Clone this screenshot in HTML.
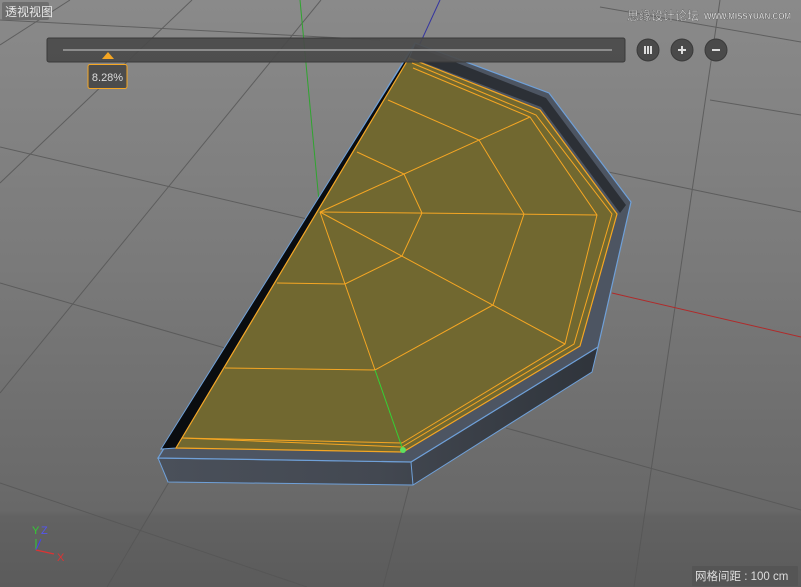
<!DOCTYPE html>
<html><head><meta charset="utf-8"><style>
html,body{margin:0;padding:0;width:801px;height:587px;overflow:hidden;background:#777;}
svg{display:block}
</style></head><body>
<svg width="801" height="587" viewBox="0 0 801 587" xmlns="http://www.w3.org/2000/svg" font-family="Liberation Sans, Noto Sans CJK SC, sans-serif">
<defs>
<linearGradient id="bg" x1="0" y1="0" x2="0" y2="1">
<stop offset="0" stop-color="#8a8a8a"/><stop offset="0.45" stop-color="#7a7a7a"/><stop offset="0.87" stop-color="#686868"/><stop offset="0.88" stop-color="#626262"/><stop offset="1" stop-color="#5b5b5b"/>
</linearGradient>
<linearGradient id="side" x1="0" y1="0" x2="1" y2="0">
<stop offset="0" stop-color="#4a505a"/><stop offset="0.5" stop-color="#434851"/><stop offset="1" stop-color="#2f343b"/>
</linearGradient>
</defs>
<rect width="801" height="587" fill="url(#bg)"/>
<g stroke="#555" stroke-width="1" fill="none" opacity="0.8">
<line x1="0" y1="147" x2="320" y2="222"/>
<line x1="560" y1="162" x2="801" y2="212"/>
<line x1="0" y1="283" x2="225" y2="348"/>
<line x1="506" y1="428" x2="801" y2="510"/>
<line x1="0" y1="483" x2="307" y2="587"/>
<line x1="600" y1="7" x2="801" y2="42"/>
<line x1="710" y1="100" x2="801" y2="115"/>
<line x1="192" y1="0" x2="0" y2="183"/>
<line x1="321" y1="0" x2="0" y2="393"/>
<line x1="169" y1="482" x2="107" y2="587"/>
<line x1="409" y1="487" x2="383" y2="587"/>
<line x1="720" y1="0" x2="634" y2="587"/>
<line x1="0" y1="45" x2="70" y2="0"/>
<line x1="0" y1="20" x2="380" y2="40"/>
</g>
<line x1="300" y1="0" x2="320" y2="212" stroke="#2fa52f" stroke-width="1"/>
<line x1="440" y1="0" x2="418" y2="48" stroke="#3535a0" stroke-width="1"/>
<line x1="612" y1="293" x2="801" y2="337" stroke="#b02a2a" stroke-width="1"/>
<polygon points="158,458 411,462 598,347 592,372 413,485 168,482" fill="url(#side)" stroke="#6fa0d8" stroke-width="1"/>
<line x1="411" y1="462" x2="413" y2="485" stroke="#6fa0d8"/>
<polygon points="415,43 549,93 631,202 598,347 411,462 158,458" fill="#4d5562" stroke="#6fa0d8" stroke-width="1.2"/>
<polygon points="414,46 546,98 626,205 620,213 541,107 409,57" fill="#2c3036"/>
<polygon points="415,44 409,58 176,448 161,449" fill="#0a0c0f" stroke="#6fa0d8" stroke-width="1"/>
<polygon points="409,58 540,110 617,214 580,346 403,452 176,448" fill="#716830" stroke="#f5a623" stroke-width="1.2"/>
<g stroke="#f5a623" stroke-width="1" fill="none">
<polyline points="412,63 536,115 612,214 574,344 402,447 182,438"/>
<polyline points="413,68 530,117 597,215 565,344 402,443"/>
<line x1="182" y1="438" x2="402" y2="443"/>
<polyline points="388,100 479,140 524,214 493,305 375,370 225,368"/>
<polyline points="357,152 404,174 422,213 402,256 345,284 277,283"/>
<line x1="320" y1="212" x2="530" y2="117"/>
<line x1="320" y1="212" x2="597" y2="215"/>
<line x1="320" y1="212" x2="565" y2="344"/>
<polyline points="320,212 345,284 375,370"/>
</g>
<line x1="375" y1="370" x2="403" y2="450" stroke="#35d035" stroke-width="1"/>
<circle cx="403" cy="450" r="3" fill="#5fe05f"/>
<rect x="47" y="38" width="578" height="24" rx="2" fill="#4a4a4a" fill-opacity="0.92" stroke="#3a3a3a"/>
<line x1="63" y1="50" x2="612" y2="50" stroke="#8c8c8c" stroke-width="2"/>
<polygon points="108,52 114,59 102,59" fill="#f5a623"/>
<rect x="88" y="64.5" width="39" height="24" rx="2" fill="#4c4c4c" stroke="#f5a623" stroke-width="1"/>
<text x="107.5" y="81" font-size="11" fill="#ddd" text-anchor="middle">8.28%</text>
<g fill="#4a4a4a" stroke="#3a3a3a">
<circle cx="648" cy="50" r="11"/><circle cx="682" cy="50" r="11"/><circle cx="716" cy="50" r="11"/>
</g>
<g stroke="#ddd" stroke-width="2">
<line x1="645" y1="46" x2="645" y2="54"/><line x1="648" y1="46" x2="648" y2="54"/><line x1="651" y1="46" x2="651" y2="54"/>
<line x1="678" y1="50" x2="686" y2="50"/><line x1="682" y1="46" x2="682" y2="54"/>
<line x1="712" y1="50" x2="720" y2="50"/>
</g>
<rect x="2" y="2" width="47" height="18" rx="2" fill="#6e6e6e"/>
<text x="5" y="16" font-size="12" fill="#e6e6e6">透视视图</text>
<text x="627" y="20" font-size="12" fill="#eee" stroke="#444" stroke-width="0.3" textLength="72" lengthAdjust="spacingAndGlyphs">思缘设计论坛</text>
<text x="704" y="19" font-size="8" font-weight="bold" fill="#eee" stroke="#444" stroke-width="0.3" textLength="87" lengthAdjust="spacingAndGlyphs">WWW.MISSYUAN.COM</text>
<line x1="36" y1="550" x2="36" y2="539" stroke="#3c3" stroke-width="1"/>
<line x1="36" y1="550" x2="41" y2="539" stroke="#44e" stroke-width="1"/>
<line x1="36" y1="550" x2="54" y2="554" stroke="#d33" stroke-width="1.2"/>
<text x="32" y="534" font-size="11" fill="#3c3">Y</text>
<text x="41" y="534" font-size="11" fill="#55e">Z</text>
<text x="57" y="561" font-size="11" fill="#d33">X</text>
<rect x="692" y="566" width="106" height="20" rx="1" fill="#555"/>
<text x="695" y="580" font-size="11.5" fill="#ddd">网格间距 : 100 cm</text>
</svg>
</body></html>
